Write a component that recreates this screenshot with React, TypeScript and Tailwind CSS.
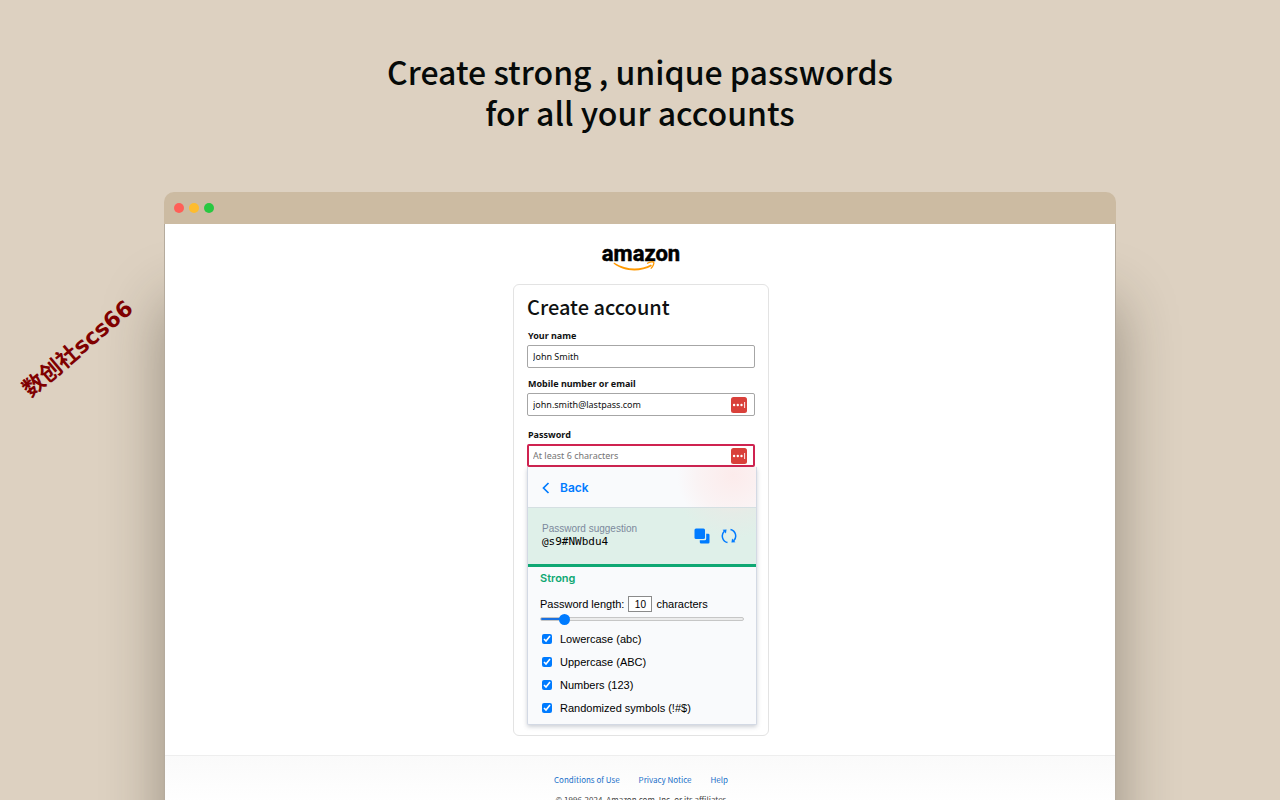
import { useState } from "react";

const charsets = [
    { id: "lower", label: "Lowercase (abc)" },
    { id: "upper", label: "Uppercase (ABC)" },
    { id: "numbers", label: "Numbers (123)" },
    { id: "symbols", label: "Randomized symbols (!#$)" },
];

const footerLinks = ["Conditions of Use", "Privacy Notice", "Help"];

const LastPassIcon = () => (
    <svg viewBox="0 0 16 16" className="size-4 shrink-0" aria-hidden="true">
        <rect width="16" height="16" rx="2.5" fill="#d9403a" />
        <circle cx="3.1" cy="8" r="1.2" fill="#fff" />
        <circle cx="6.8" cy="8" r="1.2" fill="#fff" />
        <circle cx="10.5" cy="8" r="1.2" fill="#fff" />
        <rect x="13.2" y="5" width="0.9" height="6" fill="#fff" />
    </svg>
);

const Logo = () => (
    <svg viewBox="0 0 78 28" className="h-7 w-[78px] overflow-visible" role="img" aria-label="amazon">
        <text x="39" y="18" textAnchor="middle" fontSize="22" fontWeight="700" fill="#000" stroke="#000" strokeWidth="0.5" fontFamily="Roboto, sans-serif">
            amazon
        </text>
        <path d="M12 19.5C24 27 38 27.5 49 21.5L50 23C38 29.5 22 29 11.5 20.5Z" fill="#f90" />
        <path d="M45.5 20.2C48 18.5 51 18.5 51.7 19.2C52.3 20.3 51 23.8 49.1 25.2" fill="none" stroke="#f90" strokeWidth="1.3" strokeLinecap="round" />
    </svg>
);

const CopyIcon = () => (
    <svg viewBox="0 0 16 16" className="size-4" fill="#007bff" aria-hidden="true">
        <rect x="0.5" y="0.5" width="10.5" height="10.5" rx="1.5" />
        <path d="M12.2 5.8H14.2A1.3 1.3 0 0 1 15.5 7.1V14.2A1.3 1.3 0 0 1 14.2 15.5H7.1A1.3 1.3 0 0 1 5.8 14.2V12.2H10.7A1.5 1.5 0 0 0 12.2 10.7Z" />
    </svg>
);

const RefreshIcon = () => (
    <svg viewBox="0 0 16 16" className="size-4" fill="none" stroke="#007bff" strokeWidth="1.5" aria-hidden="true">
        <path d="M6.5 14.6A6.8 6.8 0 0 1 3.3 3.2" />
        <path d="M9.5 1.4A6.8 6.8 0 0 1 12.7 12.8" />
        <path d="M1.6 1.8L5.6 1.5L4.9 5.5Z" fill="#007bff" stroke="none" />
        <path d="M14.4 14.2L10.4 14.5L11.1 10.5Z" fill="#007bff" stroke="none" />
    </svg>
);

type FieldProps = {
    id: string;
    label: string;
    value?: string;
    placeholder?: string;
    type?: string;
    icon?: boolean;
    active?: boolean;
};

const Field = ({ id, label, value, placeholder, type = "text", icon, active }: FieldProps) => (
    <div>
        <label htmlFor={id} className="block pl-px text-[9px] leading-[14px] font-bold text-[#0f1111]">
            {label}
        </label>
        <div
            className={`mt-0.5 flex h-[23px] items-center rounded-xs bg-white ${
                active ? "border-2 border-[#cf2350] pr-1.5 pl-1" : "border border-[#a6a6a6] pr-[7px] pl-[5px]"
            }`}
        >
            <input
                id={id}
                type={type}
                defaultValue={value}
                placeholder={placeholder}
                className="min-w-0 flex-1 bg-transparent text-[9px] leading-4 text-[#0f1111] outline-none placeholder:text-[#757575]"
            />
            {icon && <LastPassIcon />}
        </div>
    </div>
);

const PasswordGenerator = () => {
    const [length, setLength] = useState(10);
    const fill = ((length - 1) / 98) * 100;

    return (
        <div className="-mr-0.5 rounded-b-xs border border-t-0 border-[#d3d9e4] bg-[#f9fafc] font-['Liberation_Sans',sans-serif] text-[11px] text-black shadow-[0_2px_4px_rgba(90,100,120,0.3)]">
            <div className="bg-[radial-gradient(circle_at_90%_20%,#fcebeb_0,#fbeded88_36px,transparent_56px)]">
                <button type="button" className="flex h-10 w-full items-center gap-2.5 pt-0.5 pl-3.5 font-[Inter,sans-serif] text-[12px] font-semibold text-[#007bff]">
                    <svg viewBox="0 0 8 12" className="h-3 w-2" fill="none" stroke="currentColor" strokeWidth="1.7" aria-hidden="true">
                        <path d="M6.5 1L1.5 6L6.5 11" />
                    </svg>
                    Back
                </button>
            </div>
            <div className="flex h-[60px] items-center border-t border-b-3 border-t-[#d5dfe2] border-b-[#0fa873] bg-[#dff0e9] bg-[radial-gradient(circle_at_90%_-30px,#fbe4e4_0,#e5ece7_36px,transparent_60px)] pr-[19px] pl-3.5">
                <div className="flex-1 pb-0.5">
                    <p className="text-[10px] leading-[13px] text-[#7c899c]">Password suggestion</p>
                    <output className="block font-['DejaVu_Sans_Mono',monospace] text-[11px] leading-[13px]">@s9#NWbdu4</output>
                </div>
                <div className="flex gap-[11px]">
                    <button type="button" aria-label="Copy password"><CopyIcon /></button>
                    <button type="button" aria-label="Generate new password"><RefreshIcon /></button>
                </div>
            </div>
            <div className="px-3 pb-1">
                <p className="pt-[3px] font-[Inter,sans-serif] text-[11px] leading-4 font-semibold text-[#0fa873]">Strong</p>
                <div className="mt-[9px] flex h-[18px] items-center">
                    <label htmlFor="length">Password length:</label>
                    <input
                        id="length"
                        value={length}
                        onChange={(e) => setLength(Number(e.target.value) || 0)}
                        className="mx-1 h-4 w-6 border border-[#8a8a8a] bg-white text-center text-[10px]"
                    />
                    <span>characters</span>
                </div>
                <input
                    type="range"
                    min={1}
                    max={99}
                    value={length}
                    aria-label="Password length"
                    onChange={(e) => setLength(Number(e.target.value))}
                    className="mt-1 block h-1 w-full appearance-none rounded-full border border-[#c6c6c6] [&::-webkit-slider-thumb]:size-[11px] [&::-webkit-slider-thumb]:appearance-none [&::-webkit-slider-thumb]:rounded-full [&::-webkit-slider-thumb]:bg-[#007bff]"
                    style={{ backgroundImage: `linear-gradient(to right, #1a70e0 ${fill}%, #ececec ${fill}%)` }}
                />
                <ul className="mt-[7px]">
                    {charsets.map((c) => (
                        <li key={c.id} className="flex h-[23px] items-center gap-2 pl-0.5">
                            <input id={c.id} type="checkbox" defaultChecked className="mb-0.5 size-2.5 accent-[#007bff]" />
                            <label htmlFor={c.id}>{c.label}</label>
                        </li>
                    ))}
                </ul>
            </div>
        </div>
    );
};

const App = () => {
    return (
        <main className="relative flex h-screen flex-col items-center overflow-hidden bg-[#ddd1c1]">
            <h1 className="pt-[51px] text-center font-['Noto_Sans_CJK_SC',sans-serif] text-[32px] leading-[41px] font-medium text-[#060a09]">
                Create strong , unique passwords
                <br />
                for all your accounts
            </h1>

            <div className="absolute top-[335px] left-[10px] origin-center -rotate-40 font-['DejaVu_Sans','Noto_Sans_CJK_SC',sans-serif] text-[22px] leading-7 font-bold whitespace-nowrap text-[#800000]">
                数创社scs66
            </div>

            <div className="mt-[59px] flex w-full max-w-[952px] flex-1 flex-col rounded-t-[10px] shadow-[0_110px_60px_0_rgba(40,34,20,0.38)]">
                <div className="flex h-8 shrink-0 items-center gap-[5px] rounded-t-[10px] bg-[#ccbba2] pl-2.5">
                    <span className="size-2.5 rounded-full bg-[#ff5f57]" />
                    <span className="size-2.5 rounded-full bg-[#febc2e]" />
                    <span className="size-2.5 rounded-full bg-[#28c840]" />
                </div>

                <div className="flex-1 border-x border-[#b5ab9d] bg-white pt-[19px] font-['Noto_Sans',sans-serif]">
                    <div className="flex flex-col items-center pl-0.5">
                        <Logo />
                        <form className="mt-[13px] w-64 rounded-md border border-[#e3e3e3] px-[13px] pb-2.5">
                            <h2 className="mt-2 font-['Noto_Sans_CJK_SC',sans-serif] text-[20px] leading-7 font-medium text-[#0f1111]">Create account</h2>
                            <div className="mt-2">
                                <Field id="name" label="Your name" value="John Smith" />
                            </div>
                            <div className="mt-[9px]">
                                <Field id="email" label="Mobile number or email" value="john.smith@lastpass.com" icon />
                            </div>
                            <div className="mt-3">
                                <Field id="password" label="Password" type="password" placeholder="At least 6 characters" icon active />
                            </div>
                            <PasswordGenerator />
                        </form>
                    </div>

                    <footer className="mt-[19px] border-t border-[#eeeeee] bg-linear-to-b from-[#fafafa] to-white pt-[18px] pl-0.5 text-center font-['Noto_Sans_CJK_SC',sans-serif] text-[8px] leading-3">
                        <nav className="flex justify-center gap-[19px] text-[#1a6fc9]">
                            {footerLinks.map((text) => (
                                <a key={text} href="#">{text}</a>
                            ))}
                        </nav>
                        <p className="mt-2 text-[#444444]">© 1996-2024, Amazon.com, Inc. or its affiliates</p>
                    </footer>
                </div>
            </div>
        </main>
    );
};

export default App;
